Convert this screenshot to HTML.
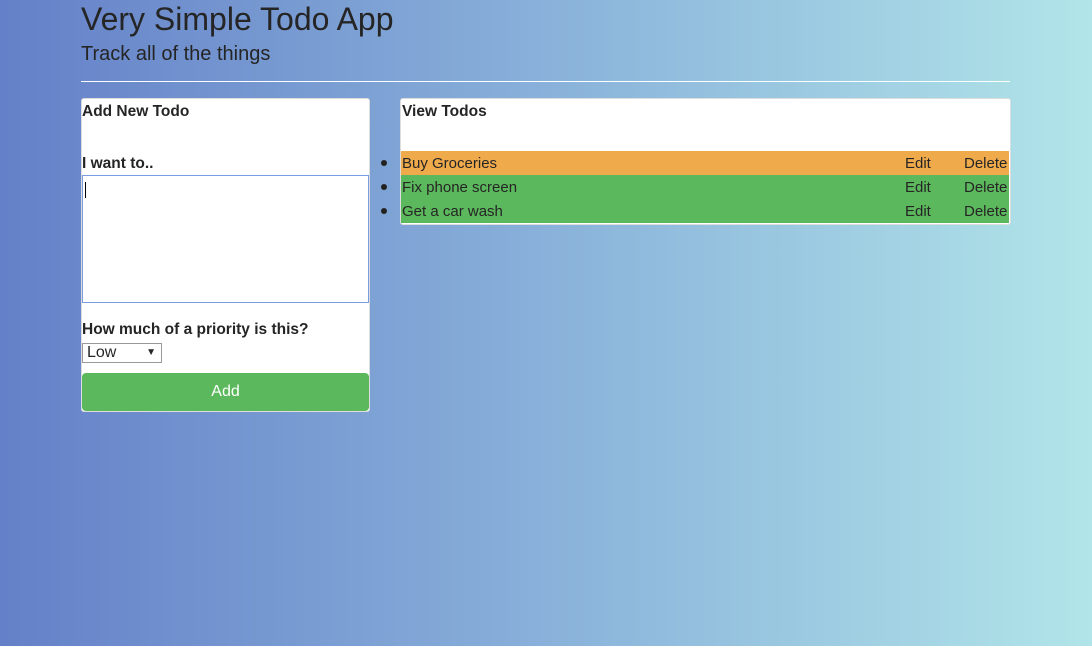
<!DOCTYPE html>
<html><head><style>
html,body{margin:0;width:1092px;height:646px;overflow:hidden}
body{background:linear-gradient(to right,#6480c8,#89b1da 50%,#b1e5e9);font-family:"Liberation Sans",sans-serif;color:#252525;position:relative}
.a{position:absolute;white-space:nowrap}
h1{position:absolute;left:81px;top:1px;margin:0;font-weight:normal;font-size:32px;color:#252525}
.sub{left:81px;top:43px;font-size:20px}
.hr{left:81px;top:81px;width:929px;height:1px;background:#fff}
.card{position:absolute;background:#fff;border:1px solid #ddd;border-radius:3px}
.b{font-weight:bold;font-size:15.5px}
.row{position:absolute;left:401px;width:608px;height:24px;font-size:15px;line-height:26px}
.row span{position:absolute;top:0}
.dot{position:absolute;left:-20px;top:9px;width:6px;height:6px;border-radius:50%;background:#222}
</style></head><body>
<h1>Very Simple Todo App</h1>
<div class="a sub">Track all of the things</div>
<div class="a hr"></div>
<div class="card" style="left:81px;top:98px;width:287px;height:312px"></div>
<div class="a b" style="left:82px;top:103px">Add New Todo</div>
<div class="a b" style="left:82px;top:155px">I want to..</div>
<div class="a" style="left:82px;top:175px;width:287px;height:128px;border:1px solid #7a9de0;box-sizing:border-box;background:#fff"></div>
<div class="a" style="left:85px;top:182px;width:1px;height:16px;background:#000"></div>
<div class="a b" style="left:82px;top:321px">How much of a priority is this?</div>
<div class="a" style="left:82px;top:343px;width:80px;height:20px;border:1px solid #999;box-sizing:border-box;font-size:16px;line-height:18px;padding-left:4px">Low<span style="position:absolute;right:5px;font-size:10px">▼</span></div>
<div class="a" style="left:82px;top:373px;width:287px;height:38px;background:#5cb85c;border-radius:4px;color:#fff;font-size:16px;text-align:center;line-height:38px">Add</div>
<div class="card" style="left:400px;top:98px;width:609px;height:125px"></div>
<div class="a b" style="left:402px;top:103px">View Todos</div>
<div class="row" style="top:151px;background:#efaa4c"><i class="dot"></i><span style="left:1px">Buy Groceries</span><span style="left:504px">Edit</span><span style="left:563px">Delete</span></div>
<div class="row" style="top:175px;background:#5cb85c"><i class="dot"></i><span style="left:1px">Fix phone screen</span><span style="left:504px">Edit</span><span style="left:563px">Delete</span></div>
<div class="row" style="top:199px;background:#5cb85c"><i class="dot"></i><span style="left:1px">Get a car wash</span><span style="left:504px">Edit</span><span style="left:563px">Delete</span></div>
</body></html>
